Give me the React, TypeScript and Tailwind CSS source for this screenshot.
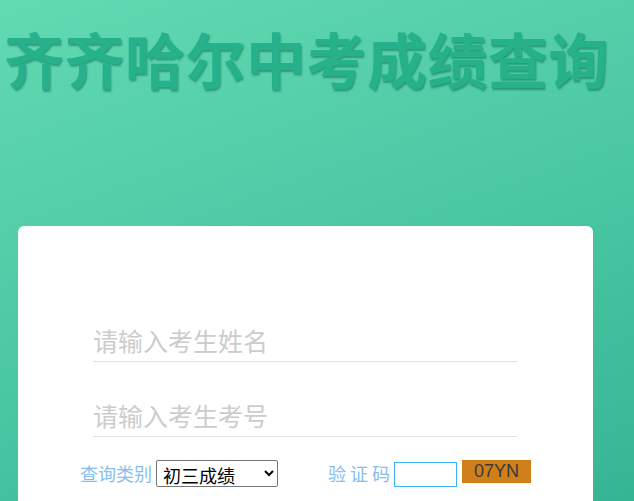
import { useState } from "react";

const FONT = `"Microsoft YaHei", "Noto Sans CJK SC", "Liberation Sans", sans-serif`;

export default function App() {
  const [kind, setKind] = useState("初三成绩");

  return (
    <div
      className="relative h-[501px] w-[634px] overflow-hidden bg-[linear-gradient(160deg,#62dab2_0%,#4ecaa6_45%,#36b595_100%)]"
      style={{ fontFamily: FONT }}
    >
      <h1 className="pl-[4px] pt-[20px] text-[60px] font-bold leading-[76px] tracking-[0.5px] text-[#26b18b] [text-shadow:1px_2px_2px_rgba(0,100,70,0.5)]">
        齐齐哈尔中考成绩查询
      </h1>

      <div className="ml-[18px] mt-[130px] h-[300px] w-[575px] rounded-[6px] bg-white pt-[92px]">
        <div className="ml-[75px] w-[424px]">
          <input
            className="block h-[44px] w-full border-b border-[#e1e1e1] bg-transparent text-[25px] text-[#333] outline-none placeholder:text-[#cccccc]"
            placeholder="请输入考生姓名"
          />
          <input
            className="mt-[31px] block h-[44px] w-full border-b border-[#e1e1e1] bg-transparent text-[25px] text-[#333] outline-none placeholder:text-[#cccccc]"
            placeholder="请输入考生考号"
          />
        </div>

        <div className="ml-[62px] mt-[22px] flex items-center text-[18px]">
          <span className="text-[#86bef0]">查询类别</span>
          <select
            value={kind}
            onChange={(e) => setKind(e.target.value)}
            className="ml-[4px] h-[27px] w-[122px] rounded-[2px] border border-[#767676] bg-white pl-[2px] text-[18px] text-black"
          >
            <option>初三成绩</option>
            <option>初二成绩</option>
          </select>
          <span className="ml-[50px] whitespace-pre text-[#86bef0]">验 证 码</span>
          <input className="ml-[4px] mt-[3px] h-[25px] w-[63px] border border-[#3ab4f7] outline-none" />
          <span
            className="mb-[3px] ml-[5px] flex h-[23px] w-[69px] items-center justify-center bg-[#d07f1b] text-[18px] text-[#3a3a3a]"
            style={{ fontFamily: `"Liberation Sans", Arial, sans-serif` }}
          >
            07YN
          </span>
        </div>
      </div>
    </div>
  );
}
